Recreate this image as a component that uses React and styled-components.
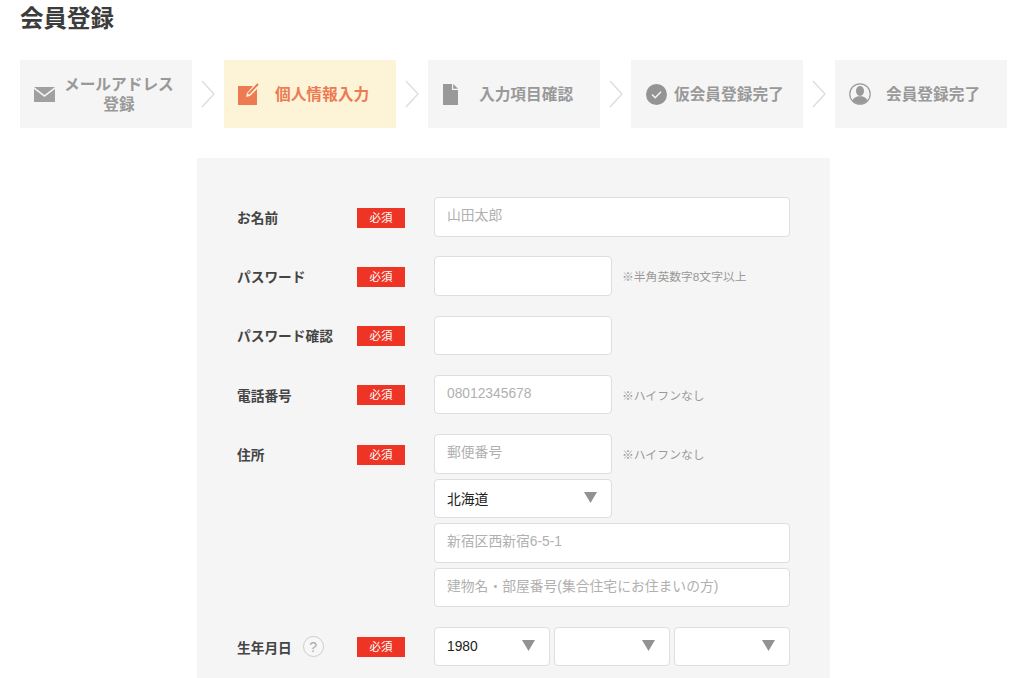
import React from "react";
import styled, { createGlobalStyle } from "styled-components";

const Global = createGlobalStyle`
  html, body { margin: 0; padding: 0; background: #fff; }
  body { font-family: "Liberation Sans", "Noto Sans CJK JP", sans-serif; color: #333; overflow: hidden; }
`;
const Page = styled.div`width: 1024px; height: 678px; overflow: hidden; padding: 0 17px 0 20px; box-sizing: border-box;`;
const Title = styled.h1`margin: 0; height: 60px; padding-top: 4px; box-sizing: border-box; font-size: 23.5px; line-height: 30px; font-weight: 700; color: #3c3c3c;`;
const Steps = styled.div`display: flex; align-items: center; height: 68px;`;
const Step = styled.div`
  width: 172px; height: 68px; flex: none; display: flex; align-items: center; box-sizing: border-box;
  padding-left: ${p => p.$pad}px; background: ${p => p.$active ? "#fdf4d8" : "#f5f5f5"};
  color: ${p => p.$active ? "#ec7a52" : "#999"};
`;
const StepIcon = styled.span`display: flex; flex: none; justify-content: center; width: ${p => p.$w}px;`;
const StepText = styled.span`
  font-size: 15.7px; line-height: 20px; font-weight: 700; text-align: center; white-space: nowrap;
  margin-left: ${p => p.$gap}px; padding-top: 1px;
`;
const Arrow = styled.svg`width: 16px; height: 28px; flex: none; margin: 0 ${p => p.$m ?? 8}px;`;
const Panel = styled.div`
  width: 633px; height: 520px; margin: 30px 0 0 177px; background: #f5f5f5; box-sizing: border-box;
  padding: 39px 40px 0; display: flex; flex-direction: column; gap: 19.75px;
`;
const Row = styled.div`display: grid; grid-template-columns: 120px 77px 1fr; align-items: start;`;
const Label = styled.div`display: flex; align-items: center; gap: 11px; height: 39.5px; font-size: 13.7px; font-weight: 700; color: #444; white-space: nowrap; box-sizing: border-box;`;
const Help = styled.span`
  width: 21px; height: 21px; border-radius: 50%; border: 1px solid #ccc; box-sizing: border-box; color: #aaa;
  font-size: 14px; font-weight: 400; display: flex; align-items: center; justify-content: center; background: #f7f7f7;
`;
const Badge = styled.span`
  width: 48px; height: 20px; margin-top: 10.5px; background: #ee3424; color: #fff; font-size: 11.5px; line-height: 20px; text-align: center;
`;
const Controls = styled.div`display: flex; flex-direction: column; gap: 5px;`;
const Line = styled.div`display: flex; align-items: center; gap: ${p => p.$gap ?? 10}px;`;
const Field = styled.input`
  width: ${p => p.$w}px; height: 39.5px; flex: none; box-sizing: border-box; border: 1px solid #dedede; border-radius: 4px; background: #fff;
  padding: 0 12px 2px; font: 13.8px "Liberation Sans", "Noto Sans CJK JP", sans-serif; color: #222; outline: none;
  &::placeholder { color: #b0b0b0; opacity: 1; }
`;
const Select = styled.div`
  width: ${p => p.$w}px; height: 39.5px; flex: none; box-sizing: border-box; border: 1px solid #dedede; border-radius: 4px; background: #fff;
  padding: 0 14px 0 12px; display: flex; align-items: center; justify-content: space-between; font-size: 13.8px; color: #222;
`;
const Tri = styled.svg`width: 13px; height: 11px; flex: none; margin-bottom: 2px;`;
const Note = styled.span`font-size: 11.8px; color: #999; white-space: nowrap; padding-bottom: 1px;`;

const Chevron = ({ m }) => (
  <Arrow $m={m} viewBox="0 0 16 28"><path d="M2 1l12 13L2 27" fill="none" stroke="#dcdcdc" strokeWidth="1.3" /></Arrow>
);
const Triangle = () => <Tri viewBox="0 0 13 11"><path d="M0 0h13L6.5 11z" fill="#929292" /></Tri>;
const Required = () => <Badge>必須</Badge>;

export default function App() {
  return (
    <Page>
      <Global />
      <Title>会員登録</Title>
      <Steps>
        <Step $pad={14}>
          <StepIcon $w={21}>
            <svg width="21" height="15" viewBox="0 0 21 15"><path d="M0 0h21L10.5 8z" fill="#a0a0a0" /><path d="M0 2l10.5 8L21 2v13H0z" fill="#a0a0a0" /></svg>
          </StepIcon>
          <StepText $gap={9}>メールアドレス<br />登録</StepText>
        </Step>
        <Chevron />
        <Step $active $pad={14}>
          <StepIcon $w={22}>
            <svg width="22" height="22" viewBox="0 0 22 22">
              <path d="M0 3h15l-6 7-1 4 4-1 7-7v16H0z" fill="#ec7a52" />
              <path d="M10.5 11L20 1" stroke="#ec7a52" strokeWidth="2" fill="none" />
            </svg>
          </StepIcon>
          <StepText $gap={15}>個人情報入力</StepText>
        </Step>
        <Chevron />
        <Step $pad={14}>
          <StepIcon $w={16}>
            <svg width="15" height="21" viewBox="0 0 15 21"><path d="M0 0h9v6h6v15H0z" fill="#999" /><path d="M10.2 0L15 4.8h-4.8z" fill="#999" /></svg>
          </StepIcon>
          <StepText $gap={21}>入力項目確認</StepText>
        </Step>
        <Chevron m={7.5} />
        <Step $pad={14}>
          <StepIcon $w={22}>
            <svg width="21" height="21" viewBox="0 0 21 21"><circle cx="10.5" cy="10.5" r="10.5" fill="#949494" /><path d="M6 10.5l3.2 3.2L15 7.8" stroke="#f4f4f4" strokeWidth="1.5" fill="none" /></svg>
          </StepIcon>
          <StepText $gap={7}>仮会員登録完了</StepText>
        </Step>
        <Chevron />
        <Step $pad={14}>
          <StepIcon $w={22}>
            <svg width="22" height="22" viewBox="0 0 22 22">
              <circle cx="11" cy="11" r="10.2" fill="none" stroke="#9a9a9a" strokeWidth="1.2" />
              <ellipse cx="11" cy="8" rx="4" ry="5" fill="#999" />
              <path d="M3.6 17.5c1-3 4-3.6 5.4-4.2h4c1.400.6 4.400 1.200 5.400 4.200-2 2.200-4.600 3.500-7.400 3.500s-5.400-1.300-7.400-3.500z" fill="#999" />
            </svg>
          </StepIcon>
          <StepText $gap={15}>会員登録完了</StepText>
        </Step>
      </Steps>
      <Panel>
        <Row>
          <Label>お名前</Label><Required />
          <Controls><Field $w={356} placeholder="山田太郎" /></Controls>
        </Row>
        <Row>
          <Label>パスワード</Label><Required />
          <Controls><Line><Field $w={178} type="password" /><Note>※半角英数字8文字以上</Note></Line></Controls>
        </Row>
        <Row>
          <Label>パスワード確認</Label><Required />
          <Controls><Field $w={178} type="password" /></Controls>
        </Row>
        <Row>
          <Label>電話番号</Label><Required />
          <Controls><Line><Field $w={178} placeholder="08012345678" /><Note>※ハイフンなし</Note></Line></Controls>
        </Row>
        <Row>
          <Label>住所</Label><Required />
          <Controls>
            <Line><Field $w={178} placeholder="郵便番号" /><Note>※ハイフンなし</Note></Line>
            <Select $w={178}>北海道<Triangle /></Select>
            <Field $w={356} placeholder="新宿区西新宿6-5-1" />
            <Field $w={356} placeholder="建物名・部屋番号(集合住宅にお住まいの方)" />
          </Controls>
        </Row>
        <Row>
          <Label>生年月日<Help>?</Help></Label><Required />
          <Controls>
            <Line $gap={4}>
              <Select $w={116}>1980<Triangle /></Select>
              <Select $w={116}><span /><Triangle /></Select>
              <Select $w={116}><span /><Triangle /></Select>
            </Line>
          </Controls>
        </Row>
      </Panel>
    </Page>
  );
}
